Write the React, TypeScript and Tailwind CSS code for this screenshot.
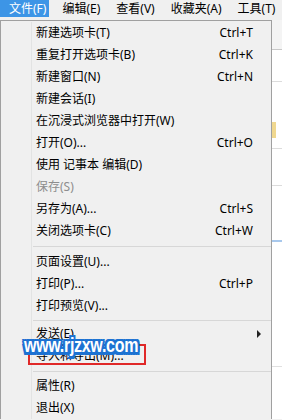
import { ReactNode } from "react"

type Row =
  | { kind: "item"; label: string; key?: string; disabled?: boolean; sub?: boolean }
  | { kind: "sep"; h: number }

const rows: Row[] = [
  { kind: "item", label: "新建选项卡(T)", key: "Ctrl+T" },
  { kind: "item", label: "重复打开选项卡(B)", key: "Ctrl+K" },
  { kind: "item", label: "新建窗口(N)", key: "Ctrl+N" },
  { kind: "item", label: "新建会话(I)" },
  { kind: "item", label: "在沉浸式浏览器中打开(W)" },
  { kind: "item", label: "打开(O)...", key: "Ctrl+O" },
  { kind: "item", label: "使用 记事本 编辑(D)" },
  { kind: "item", label: "保存(S)", disabled: true },
  { kind: "item", label: "另存为(A)...", key: "Ctrl+S" },
  { kind: "item", label: "关闭选项卡(C)", key: "Ctrl+W" },
  { kind: "sep", h: 9 },
  { kind: "item", label: "页面设置(U)..." },
  { kind: "item", label: "打印(P)...", key: "Ctrl+P" },
  { kind: "item", label: "打印预览(V)..." },
  { kind: "sep", h: 6 },
  { kind: "item", label: "发送(E)", sub: true },
  { kind: "item", label: "导入和导出(M)..." },
  { kind: "sep", h: 8 },
  { kind: "item", label: "属性(R)" },
  { kind: "item", label: "退出(X)" },
]

const menus = ["编辑(E)", "查看(V)", "收藏夹(A)", "工具(T)"]

// gutter on the left of every row, keeps the vertical line continuous
const Gutter = () => <div className="w-[31px] shrink-0 self-stretch border-r border-[#e2e3e3]" />

const MenuRow = ({ row }: { row: Row }): ReactNode => {
  if (row.kind === "sep") {
    return (
      <div className="flex" style={{ height: row.h }}>
        <Gutter />
        <div className="flex flex-1 items-center pl-[1px]">
          <div className="h-px w-full bg-[#d7d7d7]" />
        </div>
      </div>
    )
  }
  return (
    <div className="flex h-[22px]">
      <Gutter />
      <div className={`flex flex-1 items-center pl-[4px] pr-[18px] ${row.disabled ? "text-[#8d8d8d]" : "text-black"}`}>
        <span className="flex-1 whitespace-nowrap">{row.label}</span>
        {row.key && <span className="whitespace-nowrap">{row.key}</span>}
        {row.sub && (
          <svg width="5" height="8" viewBox="0 0 5 8" className="mr-[-9px]">
            <path d="M0 0 L4 4 L0 8 Z" fill="#222" />
          </svg>
        )}
      </div>
    </div>
  )
}

export default function App() {
  return (
    <div className="relative h-[420px] w-[282px] overflow-hidden bg-[#f0f0f0] text-[12px] leading-none text-black [font-family:'Noto_Sans','Noto_Sans_CJK_SC',sans-serif]">
      {/* menu bar */}
      <div className="flex h-[20px] items-start">
        <div className="flex h-[17px] items-center bg-[#3d95e6] pl-[9px] pr-[3px] text-white">文件(F)</div>
        <div className="flex h-[17px] items-center gap-[16px] pl-[13px]">
          {menus.map((m) => (
            <span key={m} className="whitespace-nowrap">{m}</span>
          ))}
        </div>
      </div>

      <div className="flex">
        {/* file menu */}
        <div className="w-[272px] border-l border-r border-t border-[#a0a0a0] bg-[#f0f0f0] pt-[1px]">
          {rows.map((r, i) => (
            <MenuRow key={i} row={r} />
          ))}
        </div>

        {/* page behind the menu */}
        <div className="flex flex-1 flex-col bg-white">
          <div className="h-[30px] border-b border-[#c8c8c8] bg-[#f4f4f4]" />
          <div className="h-[32px] border-b border-[#dcdcdc]" />
          <div className="mt-[40px] h-[16px] w-[4px] bg-[#f0d890]" />
          <div className="mt-[10px] h-px bg-[#dcdcdc]" />
          <div className="mt-[36px] h-px bg-[#dcdcdc]" />
          <div className="mt-[54px] h-[2px] bg-[#a8c8ec]" />
          <div className="mt-[124px] h-px bg-[#e0e0e0]" />
        </div>
      </div>

      {/* red highlight box */}
      <div className="absolute left-[28px] top-[344px] h-[21px] w-[118px] border-2 border-[#e02828]" />

      {/* watermark */}
      <div className="absolute left-[24px] top-[336px] origin-top scale-y-125 whitespace-nowrap text-[16px] font-bold leading-none tracking-[-0.3px] text-white [font-family:'Liberation_Sans',sans-serif] [text-shadow:2px_0_0_#1c72d2,-2px_0_0_#1c72d2,0_2px_0_#1c72d2,0_-2px_0_#1c72d2,1px_1px_0_#1c72d2,-1px_-1px_0_#1c72d2,1px_-1px_0_#1c72d2,-1px_1px_0_#1c72d2,2px_2px_0_#1c72d2,-2px_2px_0_#1c72d2,2px_-2px_0_#1c72d2,-2px_-2px_0_#1c72d2]">
        www.rjzxw.com
      </div>
    </div>
  )
}
